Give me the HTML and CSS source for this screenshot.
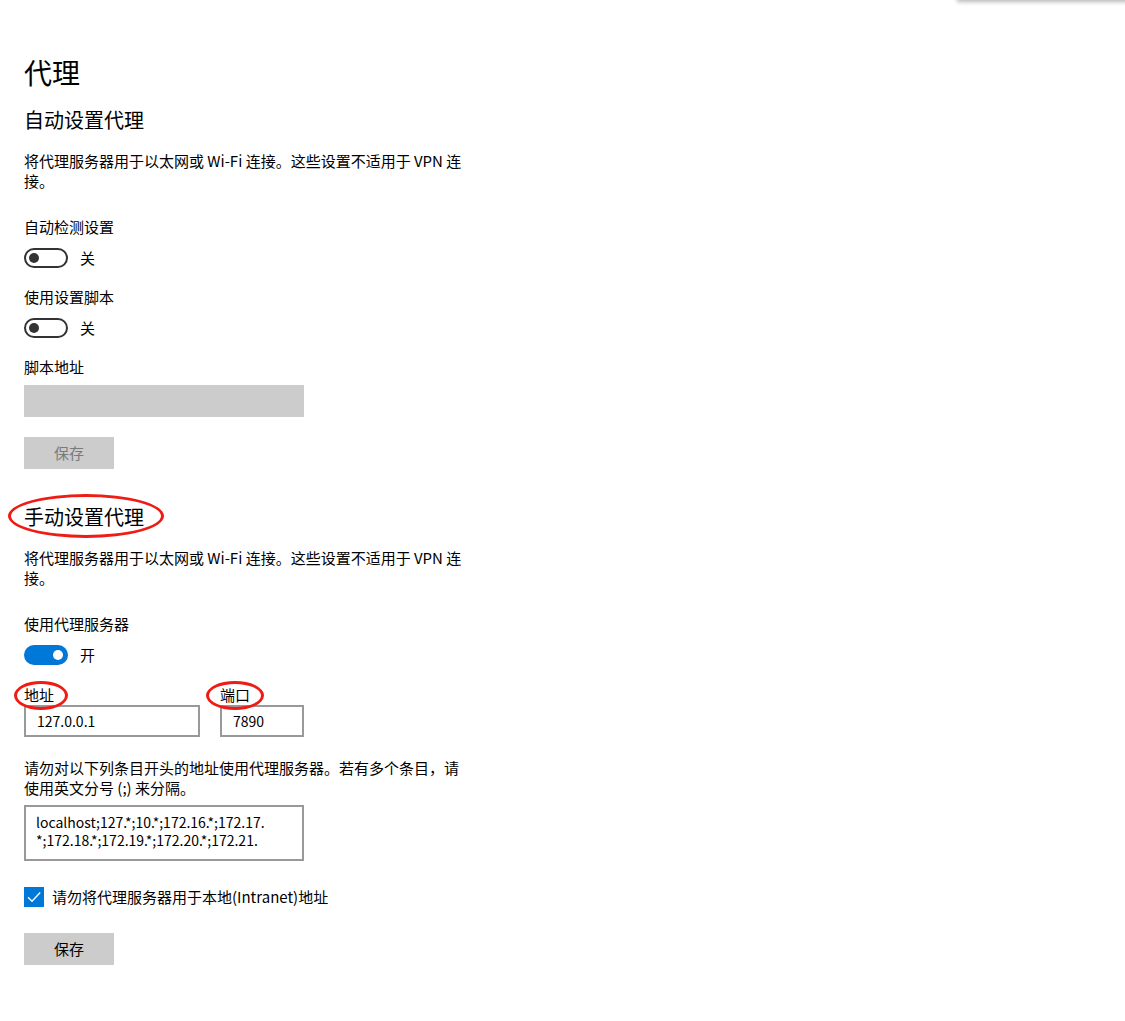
FILE: index.html
```html
<!DOCTYPE html>
<html lang="zh-CN">
<head>
<meta charset="utf-8">
<title>代理</title>
<link rel="stylesheet" href="styles.css">
</head>
<body>
<div class="top-shadow"></div>
<main class="page">
  <h1 class="title">代理</h1>

  <section class="section">
    <h2 class="subtitle">自动设置代理</h2>
    <p class="desc">将代理服务器用于以太网或 Wi-Fi 连接。这些设置不适用于 VPN 连<br>接。</p>

    <div class="field-label gap-lg">自动检测设置</div>
    <div class="toggle-row">
      <span class="toggle"><span class="knob"></span></span>
      <span class="toggle-text">关</span>
    </div>

    <div class="field-label gap-md">使用设置脚本</div>
    <div class="toggle-row">
      <span class="toggle"><span class="knob"></span></span>
      <span class="toggle-text">关</span>
    </div>

    <div class="field-label gap-md">脚本地址</div>
    <div class="input disabled wide"></div>
    <div class="button disabled">保存</div>
  </section>

  <section class="section second">
    <div class="circled">
      <h2 class="subtitle">手动设置代理</h2>
      <span class="ring ring-title"></span>
    </div>
    <p class="desc">将代理服务器用于以太网或 Wi-Fi 连接。这些设置不适用于 VPN 连<br>接。</p>

    <div class="field-label gap-lg">使用代理服务器</div>
    <div class="toggle-row">
      <span class="toggle on"><span class="knob"></span></span>
      <span class="toggle-text">开</span>
    </div>

    <div class="addr-row">
      <div class="addr-col">
        <div class="circled"><span class="plain-label">地址</span><span class="ring ring-addr"></span></div>
        <div class="input addr">127.0.0.1</div>
      </div>
      <div class="addr-col">
        <div class="circled"><span class="plain-label">端口</span><span class="ring ring-port"></span></div>
        <div class="input port">7890</div>
      </div>
    </div>

    <p class="desc exclude">请勿对以下列条目开头的地址使用代理服务器。若有多个条目，请<br>使用英文分号 (;) 来分隔。</p>
    <div class="textarea">localhost;127.*;10.*;172.16.*;172.17.<br>*;172.18.*;172.19.*;172.20.*;172.21.</div>

    <div class="check-row">
      <span class="checkbox">
        <svg width="20" height="20" viewBox="0 0 20 20"><path d="M4 10.2 L8 14.2 L16.2 5.6" fill="none" stroke="#fff" stroke-width="1.4"/></svg>
      </span>
      <span class="check-text">请勿将代理服务器用于本地(Intranet)地址</span>
    </div>

    <div class="button">保存</div>
  </section>
</main>
</body>
</html>
```

FILE: styles.css
```css
* { box-sizing: border-box; }

html, body {
  margin: 0;
  padding: 0;
  background: #ffffff;
}

body {
  font-family: "Noto Sans CJK SC", "Noto Sans", sans-serif;
  color: #000000;
  font-size: 15px;
  line-height: 20px;
  position: relative;
  width: 1125px;
  height: 1021px;
  overflow: hidden;
}

.top-shadow {
  position: absolute;
  top: -10px;
  left: 957px;
  right: -20px;
  height: 10px;
  background: #f3f3f3;
  box-shadow: 0 2px 4px rgba(0, 0, 0, 0.28);
}

.page {
  padding: 52px 0 0 24px;
  display: flex;
  flex-direction: column;
  align-items: flex-start;
}

.title {
  margin: 0;
  font-size: 28px;
  line-height: 40px;
  font-weight: 400;
}

.section {
  display: flex;
  flex-direction: column;
  align-items: flex-start;
  margin-top: 14px;
}

.section.second {
  margin-top: 34px;
}

.subtitle {
  margin: 0;
  font-size: 20px;
  line-height: 28px;
  font-weight: 400;
}

.desc {
  margin: 17px 0 0 0;
  font-size: 15px;
  line-height: 20px;
  white-space: nowrap;
}

.field-label {
  font-size: 15px;
  line-height: 20px;
}
.gap-lg { margin-top: 26px; }
.gap-md { margin-top: 19px; }

.toggle-row {
  display: flex;
  align-items: center;
  gap: 12px;
  margin-top: 11px;
  height: 20px;
}

.toggle {
  width: 44px;
  height: 20px;
  border: 2px solid #333333;
  border-radius: 10px;
  display: flex;
  align-items: center;
  padding-left: 3px;
}
.toggle .knob {
  width: 10px;
  height: 10px;
  border-radius: 50%;
  background: #333333;
}
.toggle.on {
  background: #0078d7;
  border-color: #0078d7;
  justify-content: flex-end;
  padding: 0 3px 0 0;
}
.toggle.on .knob { background: #ffffff; }

.toggle-text {
  font-size: 15px;
  line-height: 20px;
}

.input {
  height: 32px;
  border: 2px solid #999999;
  background: #ffffff;
  font-size: 14px;
  line-height: 28px;
  padding: 0 11px;
}
.input.disabled {
  background: #cccccc;
  border-color: #cccccc;
}
.input.wide { width: 280px; margin-top: 8px; }
.input.addr { width: 176px; }
.input.port { width: 84px; }

.button {
  width: 90px;
  height: 32px;
  background: #cccccc;
  text-align: center;
  font-size: 15px;
  line-height: 32px;
  margin-top: 20px;
  color: #000000;
}
.button.disabled { color: #7a7a7a; }

.circled {
  position: relative;
}

.ring {
  position: absolute;
  border: 3px solid #ee1c14;
  border-radius: 50%;
  pointer-events: none;
}
.ring-title { left: -16px; top: -9px; width: 156px; height: 44px; }
.ring-addr { left: -10px; top: -4px; width: 54px; height: 29px; }
.ring-port { left: -14px; top: -4px; width: 58px; height: 29px; }

.addr-row {
  display: flex;
  gap: 20px;
  margin-top: 20px;
}
.addr-col {
  display: flex;
  flex-direction: column;
  align-items: flex-start;
}
.plain-label {
  display: block;
  font-size: 15px;
  line-height: 20px;
}

.desc.exclude { margin-top: 21px; }

.textarea {
  width: 280px;
  height: 56px;
  margin-top: 7px;
  border: 2px solid #999999;
  padding: 6px 10px;
  font-size: 14px;
  line-height: 18px;
  white-space: nowrap;
  overflow: hidden;
}

.check-row {
  display: flex;
  align-items: center;
  gap: 8px;
  margin-top: 26px;
}
.checkbox {
  width: 20px;
  height: 20px;
  background: #0078d7;
  display: block;
}
.checkbox svg { display: block; }
.check-text {
  font-size: 15px;
  line-height: 20px;
}

.check-row + .button { margin-top: 26px; }
```
